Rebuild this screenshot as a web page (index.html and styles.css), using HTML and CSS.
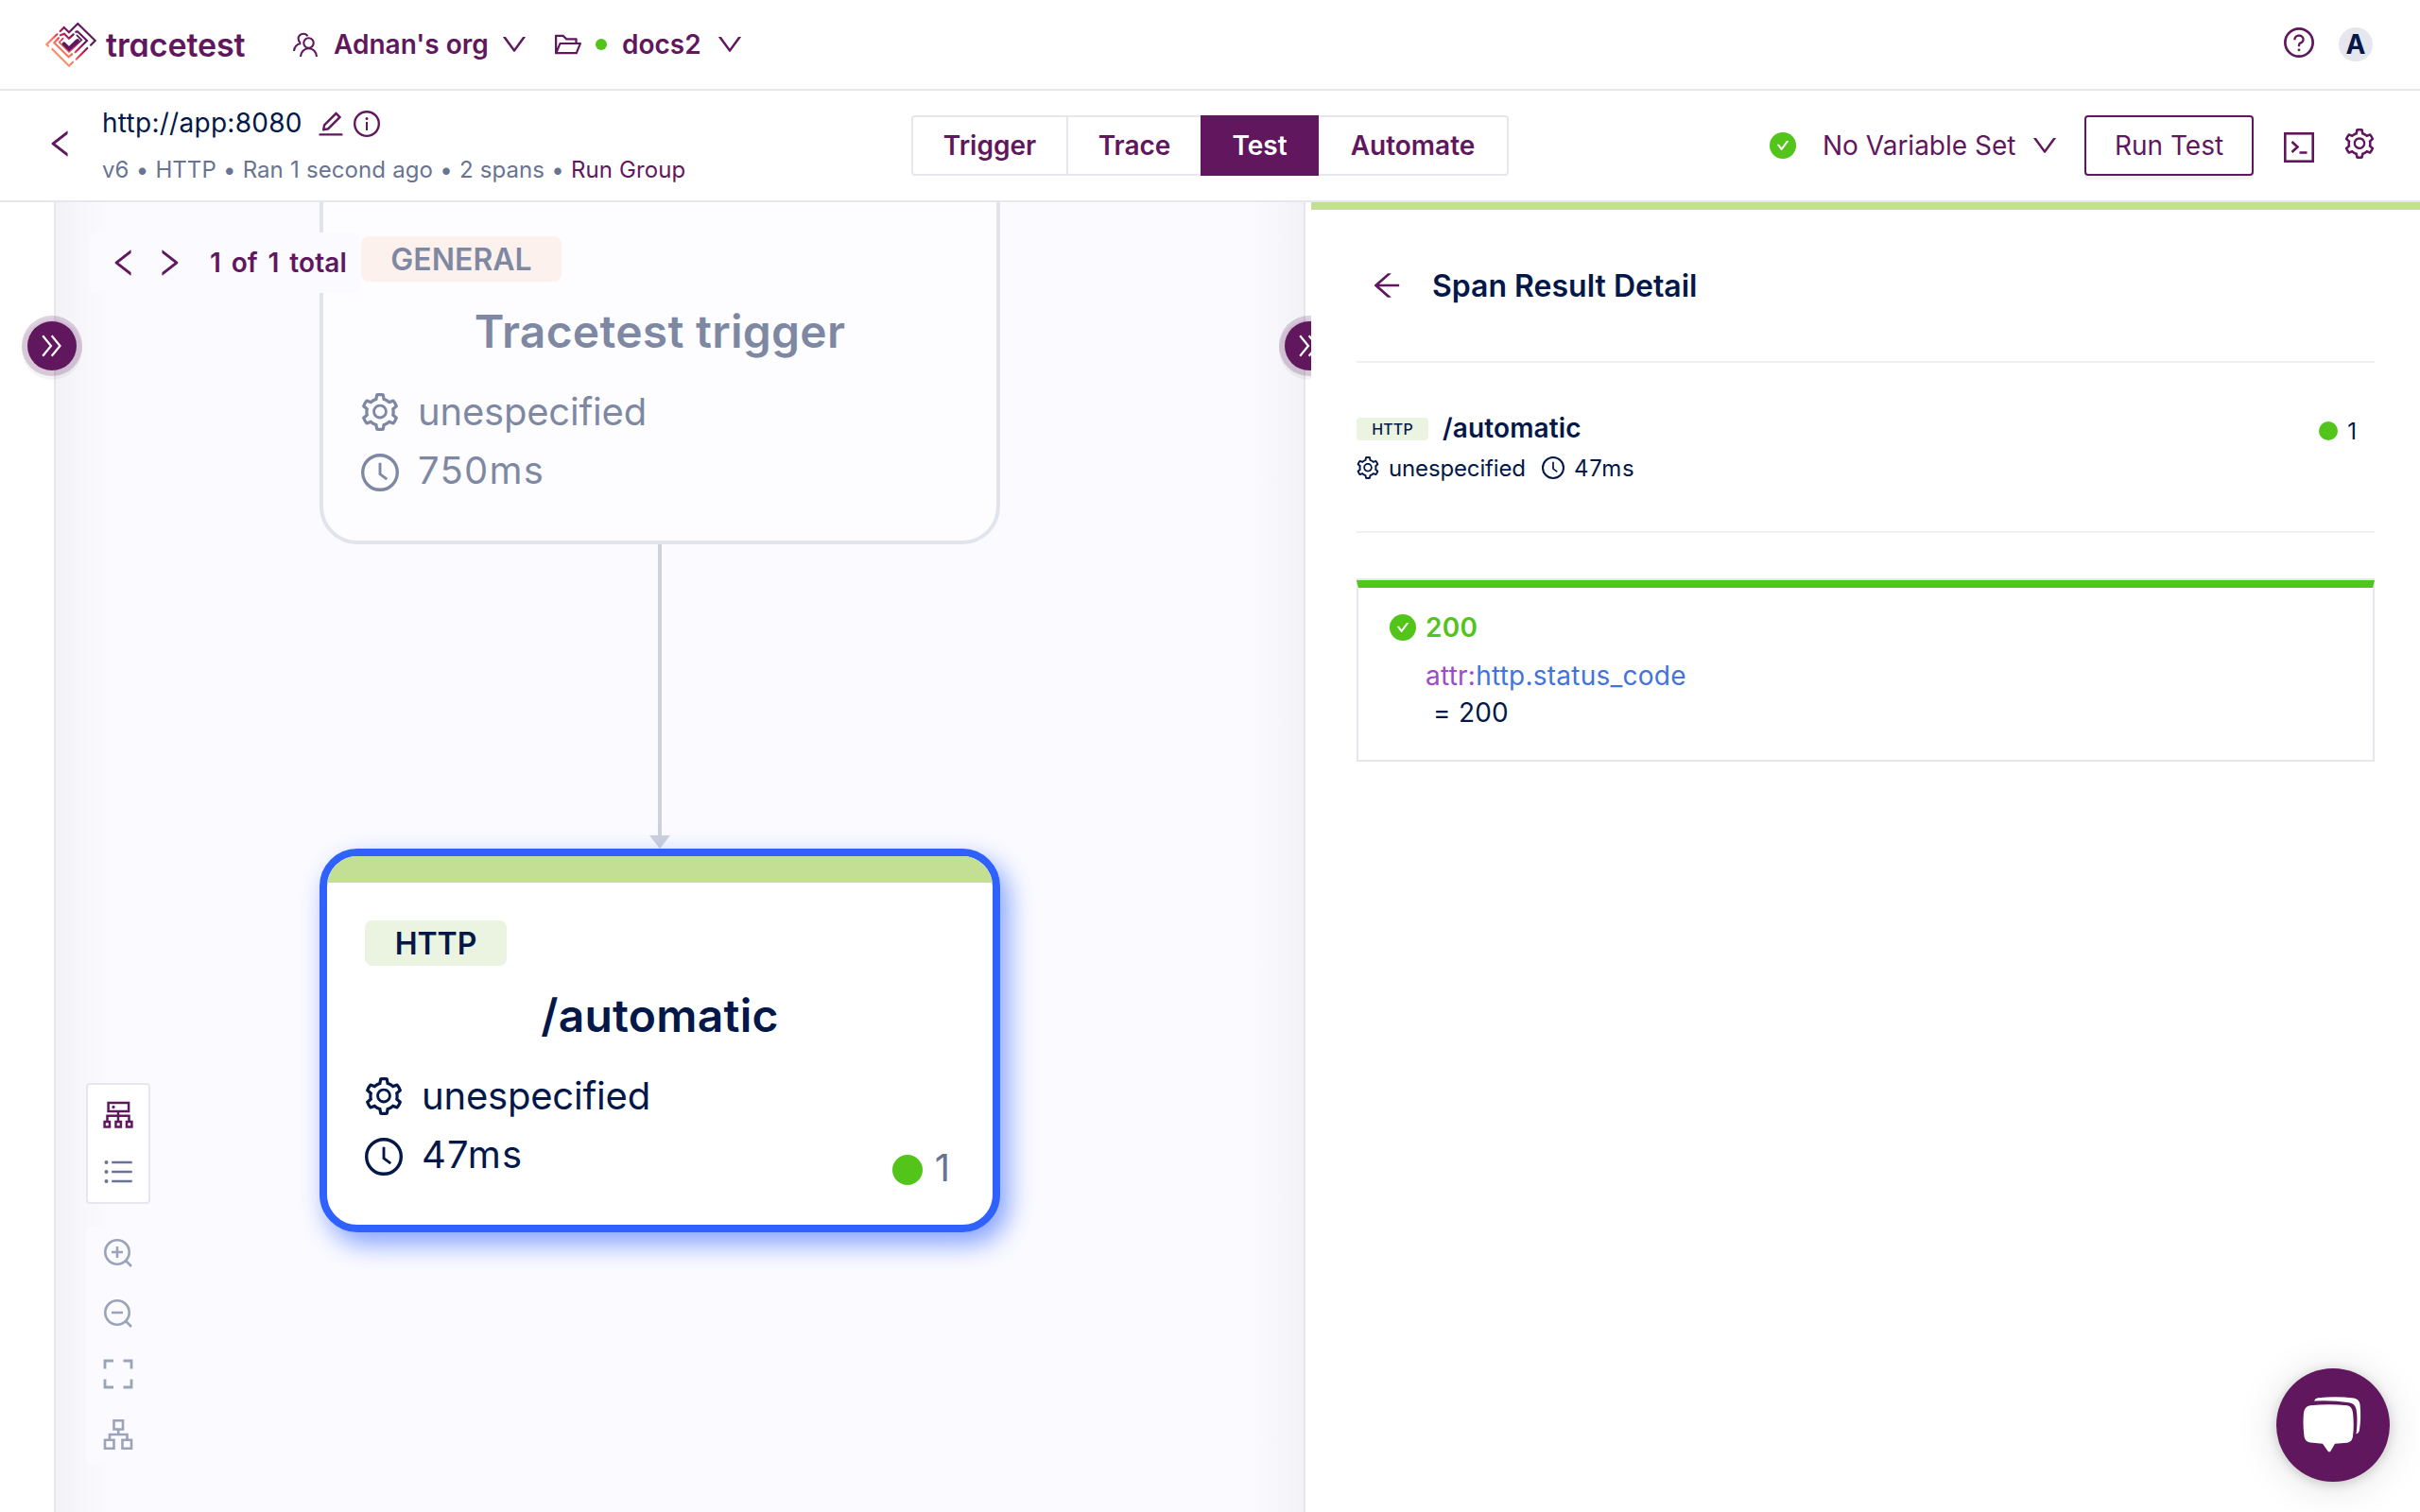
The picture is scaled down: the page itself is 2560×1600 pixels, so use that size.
FILE: index.html
```
<!DOCTYPE html>
<html lang="en">
  <head>
    <meta charset="UTF-8" />
    <title>Tracetest</title>
    <link rel="stylesheet" href="styles.css">
  </head>

  <body>
    <!-- shared icons -->
    <svg class="sprite">
      <symbol id="down" viewBox="64 64 896 896"><path d="M884 256h-75c-5.1 0-9.9 2.5-12.9 6.6L512 654.2 227.9 262.6c-3-4.1-7.8-6.6-12.9-6.6h-75c-6.5 0-10.3 7.4-6.5 12.7l352.6 486.1c12.8 17.6 39 17.6 51.7 0l352.6-486.1c3.9-5.3.1-12.7-6.4-12.7z" /></symbol>
      <symbol id="left" viewBox="64 64 896 896"><path d="M724 218.3V141c0-6.7-7.7-10.4-12.9-6.3L260.3 486.8a31.86 31.86 0 000 50.3l450.8 352.1c5.3 4.1 12.9.4 12.9-6.3v-77.3c0-4.9-2.3-9.6-6.1-12.6l-360-281 360-281.1c3.8-3 6.1-7.7 6.1-12.6z" /></symbol>
      <symbol id="double" viewBox="0 0 28 28"><path d="M4.200 3.200l8.800 10.800-8.800 10.800M13.700 3.200l8.800 10.800-8.800 10.800" fill="none" stroke="currentColor" stroke-width="2.200" /></symbol>
      <symbol id="gear" viewBox="64 64 896 896"><path d="M924.8 625.7l-65.5-56c3.1-19 4.7-38.4 4.7-57.8s-1.6-38.8-4.7-57.8l65.5-56a32.03 32.03 0 009.3-35.2l-.9-2.6a443.74 443.74 0 00-79.7-137.9l-1.8-2.1a32.12 32.12 0 00-35.1-9.5l-81.3 28.9c-30-24.6-63.5-44-99.7-57.6l-15.7-85a32.05 32.05 0 00-25.8-25.7l-2.7-.5c-52.1-9.4-106.9-9.4-159 0l-2.7.5a32.05 32.05 0 00-25.8 25.7l-15.8 85.4a351.86 351.86 0 00-99 57.4l-81.9-29.1a32 32 0 00-35.1 9.5l-1.8 2.1a446.02 446.02 0 00-79.7 137.9l-.9 2.6c-4.500 12.5-.8 26.5 9.3 35.2l66.3 56.6c-3.1 18.8-4.6 38-4.6 57.1 0 19.2 1.5 38.4 4.6 57.1L99 625.5a32.03 32.03 0 00-9.3 35.2l.9 2.6c18.1 50.4 44.9 96.9 79.7 137.9l1.8 2.1a32.12 32.12 0 0035.1 9.5l81.9-29.1c29.8 24.5 63.1 43.9 99 57.4l15.8 85.4a32.05 32.05 0 0025.8 25.7l2.7.5a449.4 449.4 0 00159 0l2.7-.5a32.05 32.05 0 0025.8-25.7l15.7-85a350 350 0 0099.7-57.6l81.3 28.9a32 32 0 0035.1-9.5l1.8-2.1c34.8-41.1 61.6-87.5 79.7-137.9l.9-2.6c4.5-12.3.8-26.3-9.3-35zM788.3 465.9c2.5 15.1 3.8 30.6 3.8 46.1s-1.3 31-3.8 46.1l-6.6 40.1 74.7 63.9a370.03 370.03 0 01-42.6 73.6L721 702.8l-31.4 25.8c-23.9 19.6-50.5 35-79.3 45.8l-38.1 14.3-17.9 97a377.5 377.5 0 01-85 0l-17.9-97.2-37.8-14.5c-28.5-10.8-55-26.2-78.7-45.7l-31.4-25.9-93.4 33.2c-17-22.9-31.2-47.6-42.6-73.6l75.5-64.5-6.5-40c-2.4-14.9-3.7-30.3-3.7-45.5 0-15.3 1.2-30.6 3.7-45.5l6.5-40-75.5-64.5c11.3-26.1 25.6-50.7 42.6-73.6l93.4 33.2 31.4-25.9c23.7-19.5 50.2-34.9 78.7-45.7l37.9-14.3 17.9-97.2c28.1-3.2 56.8-3.2 85 0l17.9 97 38.1 14.3c28.7 10.8 55.4 26.2 79.3 45.8l31.4 25.8 92.8-32.9c17 22.9 31.2 47.6 42.6 73.6L781.8 426l6.5 39.9zM512 326c-97.2 0-176 78.8-176 176s78.8 176 176 176 176-78.8 176-176-78.8-176-176-176zm79.2 255.2A111.6 111.6 0 01512 614c-29.9 0-58-11.7-79.2-32.8A111.6 111.6 0 01400 502c0-29.9 11.7-58 32.8-79.2C454 401.6 482.1 390 512 390c29.9 0 58 11.6 79.2 32.8A111.6 111.6 0 01624 502c0 29.9-11.7 58-32.8 79.2z" /></symbol>
      <symbol id="clock" viewBox="64 64 896 896"><circle cx="512" cy="512" r="410" fill="none" stroke="currentColor" stroke-width="76" /><path d="M686.7 638.6L544.1 535.5V288c0-4.4-3.6-8-8-8H488c-4.4 0-8 3.6-8 8v275.4c0 2.6 1.2 5 3.3 6.5l165.4 120.6c3.6 2.6 8.6 1.8 11.2-1.7l28.6-39c2.6-3.7 1.8-8.7-1.8-11.2z" /></symbol>
      <symbol id="check" viewBox="64 64 896 896"><circle cx="512" cy="512" r="448" fill="#52c41a" /><path fill="#fff" d="M699 353h-46.9c-10.2 0-19.9 4.9-25.9 13.3L469 584.3l-71.2-98.8c-6-8.3-15.6-13.3-25.9-13.3H325c-6.5 0-10.3 7.4-6.5 12.7l124.6 172.8a31.8 31.8 0 0051.7 0l210.6-292c3.9-5.3.1-12.7-6.4-12.7z" /></symbol>
    </svg>

    <header class="top">
      <svg class="mark" width="54" height="49" viewBox="24 37 162 147" fill="none" stroke="url(#lg)" stroke-width="6.500" stroke-linecap="round" stroke-linejoin="miter">
        <defs>
          <linearGradient id="lg" gradientUnits="userSpaceOnUse" x1="60" y1="145" x2="136" y2="62">
            <stop offset="0" stop-color="#f9936b" />
            <stop offset=".28" stop-color="#f1705c" />
            <stop offset=".5" stop-color="#dc1f4e" />
            <stop offset=".78" stop-color="#61175e" />
          </linearGradient>
        </defs>
        <path d="M71 67l12-12 16 16 28-28 55 54-14 14" />
        <path d="M61 77L28 109l5 5" />
        <path d="M46 124l53 53 12-12" />
        <path d="M122 156l35-35" />
        <path d="M72 80l12-5 15 15 14-13" />
        <path d="M66 89l-14 15 46 45 10-9" />
        <path d="M121 69l5-1 30 29-37 37" />
        <path d="M80 90l-12 12 31 31 40-38-15-15" stroke-width="5" />
        <path d="M83 107l16 16 27-26" stroke="#61175e" stroke-width="12" />
      </svg>
      <span class="wordmark">tracetest</span>

      <svg class="users" width="28" height="28" viewBox="0 0 28 28" fill="none" stroke="currentColor" stroke-width="2.100">
        <circle cx="17.500" cy="12.500" r="5.200" />
        <path d="M9 27c.3-5 3.700-8.700 8.500-8.700S25.700 22 26 27M16.500 5.300C15.500 3.500 14 2.700 12 2.700 8.800 2.700 6.600 5 6.600 8c0 2 .9 3.500 2.400 4.500M9.300 13C4.800 13.800 2.300 17 2 21" />
      </svg>
      <b class="org">Adnan's org</b>
      <svg class="icon28"><use href="#down" /></svg>
      <svg class="icon28 folder" viewBox="64 64 896 896"><path d="M928 444H820V330.400c0-17.700-14.300-32-32-32H473L355.700 186.200a8.150 8.150 0 00-5.500-2.200H96c-17.700 0-32 14.300-32 32v592c0 17.700 14.300 32 32 32h698c13 0 24.800-7.900 29.700-20l134-332c1.500-3.800 2.300-7.900 2.300-12 0-17.700-14.300-32-32-32zM136 256h188.500l119.600 114.400H748V444H238c-13 0-24.800 7.900-29.700 20L136 643.200V256zm635.300 512H159l103.300-256h612.400L771.300 768z" /></svg>
      <i class="env-dot"></i>
      <b class="env">docs2</b>
      <svg class="icon28"><use href="#down" /></svg>

      <div class="top-right">
        <svg class="icon32 help" viewBox="64 64 896 896"><circle cx="512" cy="512" r="410" fill="none" stroke="currentColor" stroke-width="76" /><path d="M623.600 316.700C593.600 290.400 554 276 512 276s-81.600 14.500-111.600 40.700C369.200 344 352 380.700 352 420v7.600c0 4.400 3.600 8 8 8h48c4.400 0 8-3.600 8-8V420c0-44.100 43.100-80 96-80s96 35.900 96 80c0 31.100-22 59.600-56.100 72.700-21.200 8.100-39.200 22.300-52.100 40.900-13.100 19-19.900 41.800-19.900 64.900V620c0 4.400 3.600 8 8 8h48c4.400 0 8-3.600 8-8v-22.700a48.300 48.300 0 0130.900-44.800c59-22.700 97.100-74.700 97.100-132.500.1-39.300-17.100-76-48.300-103.300zM472 732a40 40 0 1080 0 40 40 0 10-80 0z" /></svg>
        <span class="avatar">A</span>
      </div>
    </header>

    <div class="bar">
      <svg class="icon32 back"><use href="#left" /></svg>
      <div class="info">
        <div class="info-title">
          <span>http://app:8080</span>
          <svg class="icon28" viewBox="64 64 896 896"><path d="M257.700 752c2 0 4-.2 6-.5L431.900 722c2-.4 3.900-1.300 5.300-2.800l423.900-423.900a9.960 9.960 0 000-14.100L694.900 114.900c-1.900-1.900-4.400-2.900-7.100-2.900s-5.200 1-7.100 2.900L256.800 538.800c-1.500 1.500-2.400 3.300-2.800 5.300l-29.500 168.200a33.500 33.500 0 009.400 29.800c6.600 6.400 14.900 9.900 23.800 9.900zm67.400-174.400L687.800 215l73.300 73.300-362.700 362.600-88.900 15.700 15.600-89zM880 836H144c-17.700 0-32 14.300-32 32v36c0 4.400 3.600 8 8 8h784c4.400 0 8-3.600 8-8v-36c0-17.700-14.300-32-32-32z" /></svg>
          <svg class="icon28 about" viewBox="64 64 896 896"><circle cx="512" cy="512" r="410" fill="none" stroke="currentColor" stroke-width="76" /><path d="M464 336a48 48 0 1096 0 48 48 0 10-96 0zm72 112h-48c-4.400 0-8 3.600-8 8v272c0 4.400 3.600 8 8 8h48c4.400 0 8-3.600 8-8V456c0-4.400-3.600-8-8-8z" /></svg>
        </div>
        <div class="info-sub">v6 • HTTP • Ran 1 second ago • 2 spans • <a>Run Group</a></div>
      </div>

      <ul class="tabs">
        <li class="t1">Trigger</li>
        <li class="t2">Trace</li>
        <li class="t3 current">Test</li>
        <li class="t4">Automate</li>
      </ul>

      <div class="actions">
        <svg class="icon28"><use href="#check" /></svg>
        <span class="vars">No Variable Set</span>
        <svg class="icon28"><use href="#down" /></svg>
        <span class="run">Run Test</span>
        <svg class="console" width="32" height="32" viewBox="0 0 32 32" fill="none" stroke="currentColor" stroke-width="2.600"><rect x="1.300" y="1.300" width="29.400" height="29.400" /><path d="M8.500 10l6 5.500-6 5.500M16.500 21.500h8" /></svg>
        <svg class="icon32 settings"><use href="#gear" /></svg>
      </div>
    </div>

    <main class="main">
      <aside class="drawer"></aside>
      <section class="canvas">
        <div class="graph">
          <div class="node node-trigger">
            <div class="node-strip"></div>
            <div class="node-body">
              <span class="tag tag-general">GENERAL</span>
              <div class="node-name">Tracetest trigger</div>
              <div class="node-row"><svg><use href="#gear" /></svg>unespecified</div>
              <div class="node-row time"><svg><use href="#clock" /></svg>750ms</div>
            </div>
          </div>
          <svg class="edge" width="24" height="322" viewBox="0 0 24 322"><path d="M12 0v310" stroke="#cdd1dc" stroke-width="4" /><path d="M1 308h22L12 322z" fill="#cdd1dc" /></svg>
          <div class="node node-http">
            <div class="node-strip"></div>
            <div class="node-body">
              <span class="tag tag-http">HTTP</span>
              <div class="node-name">/automatic</div>
              <div class="node-row"><svg><use href="#gear" /></svg>unespecified</div>
              <div class="node-row time"><svg><use href="#clock" /></svg>47ms</div>
            </div>
            <div class="node-count"><i></i>1</div>
          </div>
          <div class="pager">
            <svg class="icon32"><use href="#left" /></svg>
            <svg class="icon32 flip"><use href="#left" /></svg>
            <b>1 of 1 total</b>
          </div>
          <div class="tools">
            <div class="switch">
              <svg class="line" width="32" height="32" viewBox="0 0 32 32" stroke="#61175e" stroke-width="2.500"><path d="M5.600 3h21.500v9H5.600zM16 12v10M4.500 22v-5.200h23V22M1.600 23h5.400v5.600H1.600zM13.500 23h5.400v5.600h-5.400zM25 23h5.400v5.600H25z" /><circle cx="11" cy="7.400" r="1.600" fill="#61175e" stroke="none" /></svg>
              <svg class="list" width="32" height="32" viewBox="0 0 32 32"><circle cx="3.500" cy="6" r="2" /><circle cx="3.500" cy="16" r="2" /><circle cx="3.500" cy="26" r="2" /><path d="M9.200 4.800h21.500v2.400H9.200zM9.200 14.800h21.500v2.400H9.200zM9.200 24.800h21.500v2.400H9.200z" /></svg>
            </div>
            <div class="zoom">
              <svg width="32" height="32" viewBox="0 0 32 32"><circle cx="15" cy="15" r="12.700" /><path d="M9 15h12M15 9v12M24 24l6 6" /></svg>
              <svg width="32" height="32" viewBox="0 0 32 32"><circle cx="15" cy="15" r="12.700" /><path d="M9 15h12M24 24l6 6" /></svg>
              <svg width="32" height="32" viewBox="0 0 32 32"><path d="M2 10.500V2h9M21.500 2H30v8.500M2 21.500V30h9M21.500 30H30v-8.500" stroke-width="2.800" /></svg>
              <svg width="32" height="32" viewBox="0 0 32 32"><path d="M11.500 1.200h9.500v9.300h-9.500zM16.200 10.500V16M7 21.500V16h18.500v5.500M2 21.800h9.500v9H2zM20.500 21.800H30v9h-9.500z" /></svg>
            </div>
          </div>
        </div>
        <span class="toggle toggle-left"><svg class="icon28"><use href="#double" /></svg></span>
        <span class="toggle toggle-right"><svg class="icon28"><use href="#double" /></svg></span>
      </section>

      <section class="panel">
        <div class="panel-head">
          <svg class="icon32" viewBox="64 64 896 896"><path d="M872 474H286.900l350.200-304c5.600-4.900 2.200-14-5.200-14h-88.500c-3.900 0-7.600 1.400-10.500 3.900L155 487.800a31.960 31.960 0 000 48.300L535.100 866c1.500 1.300 3.300 2 5.200 2h91.500c7.400 0 10.800-9.200 5.200-14L286.900 550H872c4.400 0 8-3.600 8-8v-60c0-4.400-3.600-8-8-8z" /></svg>
          <h1>Span Result Detail</h1>
        </div>
        <div class="span">
          <div>
            <div class="span-title"><span class="tag-small">HTTP</span><b>/automatic</b></div>
            <div class="span-meta">
              <svg><use href="#gear" /></svg><span class="service">unespecified</span>
              <svg><use href="#clock" /></svg><span class="duration">47ms</span>
            </div>
          </div>
          <div class="span-count"><i></i>1</div>
        </div>
        <div class="result">
          <div class="result-body">
            <div class="result-value"><svg class="icon28"><use href="#check" /></svg>200</div>
            <div class="result-line"><span class="attr">attr:</span><span class="attr-name">http.status_code</span></div>
            <div class="result-line expected">= 200</div>
          </div>
        </div>
      </section>
    </main>

    <div class="chat">
      <svg width="64" height="62" viewBox="1 -5 64 62">
        <path d="M2 13Q3 6 9 5.300 29 3 48 5.300 53 6 54 13 55.500 26 54 38 53 44 48 44.800L35 45.800 30.500 53.500Q29 55.700 27.500 53.500L22 45.800 9 44.500Q3.500 44 2.500 38 .8 25 2 13z" />
        <path d="M13 .5Q14-2.300 17-2.700 36-4.700 55-2.600 60.500-2 61.500 4 63 18 61 31 60.500 34.500 57.500 35.500 59.500 20 57.500 9 56 3 50 2.200 32-.6 13 .5z" />
      </svg>
    </div>
  </body>
</html>
```
FILE: styles.css
```
* {
  box-sizing: border-box;
  margin: 0;
  padding: 0;
}

body {
  width: 2560px;
  height: 1600px;
  overflow: hidden;
  position: relative;
  background: #fff;
  color: #031849;
  font-family: Inter, "Open Sans", sans-serif;
  font-size: 28px;
}

b,
h1 {
  font-weight: 600;
}

svg {
  display: block;
  flex: none;
  overflow: visible;
  fill: currentColor;
}

.sprite {
  position: absolute;
  width: 0;
  height: 0;
}

.icon28 {
  width: 28px;
  height: 28px;
}

.icon32 {
  width: 32px;
  height: 32px;
}

/* top bar */
.top {
  display: flex;
  align-items: center;
  height: 96px;
  padding: 0 50px 0 48px;
  border-bottom: 2px solid #e6e6ee;
  color: #61175e;
}

.mark,
.users,
.line,
.bar .console,
.zoom svg {
  fill: none;
}

.wordmark {
  width: 148px;
  margin-left: 10px;
  font-size: 34px;
  font-weight: 600;
  font-feature-settings: "cv11";
  letter-spacing: -0.1px;
}

.users {
  margin-left: 49px;
}

.org {
  width: 160px;
  margin: 0 17px 0 16px;
  white-space: nowrap;
}

.folder {
  margin-left: 29px;
}

.env-dot {
  width: 12px;
  height: 12px;
  margin: 0 16px 0 15px;
  border-radius: 50%;
  background: #52c41a;
}

.env {
  width: 83px;
  margin-right: 17px;
}

.top-right {
  display: flex;
  align-items: center;
  gap: 26px;
  margin-left: auto;
}

.help {
  margin-top: -4px;
}

.avatar {
  width: 36px;
  height: 36px;
  border-radius: 50%;
  background: #e6e6ef;
  color: #031849;
  font-weight: 700;
  line-height: 36px;
  text-align: center;
}

/* run bar */
.bar {
  display: flex;
  align-items: center;
  height: 118px;
  padding: 0 48px;
  border-bottom: 2px solid #e6e6ee;
  color: #61175e;
}

.back {
  margin-top: -4px;
}

.info {
  width: 856px;
  margin-left: 28px;
}

.info-title {
  display: flex;
  align-items: center;
  gap: 10px;
  height: 38px;
  line-height: 38px;
}

.info-title span {
  width: 218px;
  color: #031849;
  letter-spacing: 0.27px;
}

.info-title svg {
  margin-top: 3px;
}

.info-sub {
  margin-top: 12px;
  line-height: 37px;
  font-size: 24px;
  color: #687492;
  word-spacing: 0.4px;
  letter-spacing: 0.05px;
}

.info-sub a {
  color: #61175e;
}

.tabs {
  display: flex;
  width: 632px;
  height: 64px;
  border: 2px solid #e6e6ee;
  border-radius: 4px;
  list-style: none;
  font-weight: 600;
  line-height: 60px;
  text-align: center;
}

.t1 {
  width: 164px;
  border-right: 2px solid #e6e6ee;
}

.t2 {
  width: 140px;
}

.t3 {
  width: 125px;
}

.t4 {
  flex: 1;
}

.tabs .current {
  height: 64px;
  margin-top: -2px;
  background: #61175e;
  color: #fff;
  line-height: 64px;
}

.actions {
  display: flex;
  align-items: center;
  margin-left: auto;
}

.vars {
  width: 205px;
  margin: 0 16px 0 28px;
  white-space: nowrap;
}

.run {
  width: 179px;
  height: 64px;
  margin-left: 28px;
  border: 2px solid #61175e;
  border-radius: 4px;
  box-shadow: 0 4px 0 rgba(0, 0, 0, 0.045);
  line-height: 60px;
  text-align: center;
}

.console {
  margin: 4px 0 0 32px;
}

.settings {
  margin: -4px 0 0 32px;
}

/* main area */
.main {
  display: flex;
  height: 1386px;
}

.drawer {
  width: 57px;
}

.canvas {
  position: relative;
  width: 1324px;
  margin-right: 6px;
  border: 2px solid #e6e6ee;
  border-width: 0 2px;
}

.graph {
  position: relative;
  height: 1386px;
  overflow: hidden;
  background: linear-gradient(90deg, #f2f2f7, rgba(251, 251, 255, 0) 56px, rgba(251, 251, 255, 0) 1264px, #f2f2f7), #fbfbff;
}

.node {
  position: absolute;
  left: 279px;
  width: 720px;
  border-radius: 40px;
  background: #fff;
  overflow: hidden;
}

.node-trigger {
  top: -36px;
  height: 398px;
  border: 4px solid #c9cfdb;
  opacity: 0.5;
}

.node-http {
  top: 684px;
  height: 406px;
  border: 8px solid #2f61ff;
  box-shadow: 8px 12px 28px rgba(47, 97, 255, 0.6);
}

.node-strip {
  height: 28px;
}

.node-http .node-strip {
  background: #c2df94;
}

.node-body {
  padding: 40px;
  font-size: 40px;
}

.tag {
  display: block;
  width: 150px;
  height: 48px;
  border-radius: 8px;
  background: #ebf4e0;
  font-size: 32px;
  font-weight: 600;
  line-height: 50px;
  text-align: center;
}

.tag-general {
  width: 212px;
  background: #ffe8dd;
}

.node-name {
  margin: 23px 0;
  font-size: 48px;
  font-weight: 600;
  line-height: 60px;
  letter-spacing: 0.25px;
  text-align: center;
}

.node-row {
  display: flex;
  align-items: center;
  gap: 20px;
  height: 63px;
  letter-spacing: -0.2px;
}

.node-row svg {
  width: 40px;
  height: 40px;
  margin-top: 1px;
}

.time {
  height: 61px;
  gap: 20px;
  letter-spacing: 1.2px;
}

.time svg {
  margin-top: 4px;
}

.node-count {
  position: absolute;
  right: 45px;
  bottom: 36px;
  display: flex;
  align-items: center;
  gap: 13px;
  height: 50px;
  color: #687492;
  font-size: 40px;
}

.node-count i {
  width: 32px;
  height: 32px;
  margin-top: 5px;
  border-radius: 50%;
  background: #52c41a;
}

.edge {
  position: absolute;
  left: 627px;
  top: 362px;
}

.pager {
  position: absolute;
  left: 35px;
  top: 32px;
  display: flex;
  align-items: center;
  width: 287px;
  height: 64px;
  padding-left: 21px;
  border-radius: 8px;
  background: #fbfbff;
  color: #61175e;
}

.flip {
  margin-left: 16px;
  transform: scaleX(-1);
}

.pager b {
  margin-left: 27px;
  white-space: nowrap;
  word-spacing: 3.6px;
  letter-spacing: 0.1px;
}

.tools {
  position: absolute;
  left: 32px;
  top: 932px;
  width: 68px;
}

.switch {
  display: flex;
  flex-direction: column;
  align-items: center;
  gap: 28px;
  height: 128px;
  padding-top: 16px;
  border: 2px solid #e6e6ee;
  border-radius: 4px;
  background: #fff;
}

.list {
  fill: #687492;
}

.zoom {
  display: flex;
  flex-direction: column;
  align-items: center;
  gap: 32px;
  height: 252px;
  margin-top: 24px;
  padding-top: 12px;
  border-radius: 8px;
  background: #fbfbff;
  stroke: #9aa3ba;
  stroke-width: 2.6;
}

.toggle {
  position: absolute;
  top: 126px;
  display: flex;
  align-items: center;
  justify-content: center;
  width: 52px;
  height: 52px;
  border-radius: 50%;
  background: #61175e;
  box-shadow: 0 0 0 6px rgba(97, 23, 94, 0.2), 0 4px 0 6px rgba(0, 0, 0, 0.045);
  color: #fff;
}

.toggle-left {
  left: -30px;
}

.toggle-right {
  left: 1300px;
}

/* right panel */
.panel {
  position: relative;
  flex: 1;
  padding: 0 48px;
  border-top: 8px solid #c2df94;
  background: #fff;
}

.panel-head {
  display: flex;
  align-items: center;
  gap: 32px;
  height: 162px;
  padding-left: 16px;
  border-bottom: 2px solid #f0f0f0;
  color: #61175e;
}

.panel-head h1 {
  color: #031849;
  font-size: 32px;
}

.span {
  display: flex;
  justify-content: space-between;
  height: 180px;
  padding-top: 47px;
  border-bottom: 2px solid #f0f0f0;
}

.span-title {
  display: flex;
  align-items: center;
  gap: 15px;
  height: 44px;
  letter-spacing: 0.15px;
}

.tag-small {
  width: 76px;
  height: 24px;
  margin-top: 2px;
  border-radius: 4px;
  background: #ebf4e0;
  font-size: 16px;
  font-weight: 500;
  line-height: 24px;
  text-align: center;
}

.span-meta {
  display: flex;
  align-items: center;
  gap: 10px;
  height: 40px;
  font-size: 24px;
}

.span-meta svg {
  width: 24px;
  height: 24px;
}

.service {
  width: 152px;
  letter-spacing: -0.15px;
}

.duration {
  letter-spacing: 0.7px;
}

.span-count {
  display: flex;
  align-items: center;
  gap: 10px;
  height: 50px;
  margin-right: 19px;
  font-size: 24px;
}

.span-count i {
  width: 20px;
  height: 20px;
  border-radius: 50%;
  background: #52c41a;
}

.result {
  margin-top: 48px;
  border-top: 2px solid #e6e6ee;
}

.result-body {
  height: 192px;
  padding: 20px 33px;
  border: 2px solid #e6e6ee;
  border-top: 8px solid #52c41a;
}

.result-value {
  display: flex;
  align-items: center;
  gap: 10px;
  height: 44px;
  margin-bottom: 10px;
  color: #52c41a;
  font-weight: 600;
  letter-spacing: 0.3px;
}

.result-line {
  padding-left: 38px;
  line-height: 39px;
  letter-spacing: 0.24px;
}

.attr {
  color: #9a4cc9;
}

.attr-name {
  color: #4274d9;
}

.expected {
  padding-left: 46px;
}

.chat {
  position: absolute;
  right: 32px;
  bottom: 32px;
  display: flex;
  align-items: center;
  justify-content: center;
  width: 120px;
  height: 120px;
  border-radius: 50%;
  background: #61175e;
  box-shadow: 0 2px 12px rgba(0, 0, 0, 0.16), 0 4px 44px rgba(0, 0, 0, 0.13);
  color: #fff;
}
```
